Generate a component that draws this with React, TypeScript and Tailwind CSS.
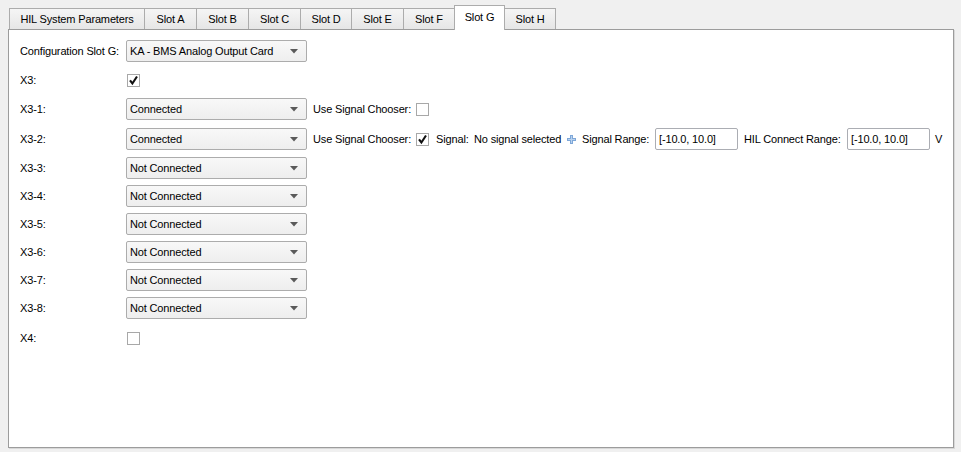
import React from "react";

const tabs = [
  { label: "HIL System Parameters", w: "w-[136px]" },
  { label: "Slot A", w: "w-[52px]" },
  { label: "Slot B", w: "w-[52px]" },
  { label: "Slot C", w: "w-[52px]" },
  { label: "Slot D", w: "w-[51px]" },
  { label: "Slot E", w: "w-[52px]" },
  { label: "Slot F", w: "w-[51px]" },
  { label: "Slot G", w: "w-[51px]" },
  { label: "Slot H", w: "w-[51px]" },
];

function Combo({ value }: { value: string }) {
  return (
    <div className="flex h-[22px] w-[181px] shrink-0 items-center justify-between rounded-[2px] border border-[#acacac] bg-linear-to-b from-[#f8f8f8] to-[#eeeeee] pl-[3px] pr-[8px]">
      <span>{value}</span>
      <svg width="8" height="5" viewBox="0 0 8 5">
        <path d="M0 0h8L4 4.5z" fill="#5a5a5a" />
      </svg>
    </div>
  );
}

function Check({ checked }: { checked?: boolean }) {
  return (
    <div className="flex h-[13px] w-[13px] shrink-0 items-center justify-center border border-[#a8a8a8] bg-white">
      {checked && (
        <svg width="11" height="11" viewBox="0 0 11 11">
          <path d="M2 5.3l2.4 3.2L9 1.5" fill="none" stroke="#111" strokeWidth="2.1" />
        </svg>
      )}
    </div>
  );
}

function Edit({ value }: { value: string }) {
  return (
    <div className="flex h-[22px] w-[83px] shrink-0 items-center rounded-[2px] border border-[#abadb3] bg-white pl-[3px]">
      {value}
    </div>
  );
}

function Row({ label, mt, children }: { label: string; mt: string; children: React.ReactNode }) {
  return (
    <div className={`flex h-[22px] items-center ${mt}`}>
      <span className="w-[106px] shrink-0">{label}</span>
      {children}
    </div>
  );
}

export default function App() {
  const notConnected = ["X3-3:", "X3-4:", "X3-5:", "X3-6:", "X3-7:", "X3-8:"];
  return (
    <div className="h-[452px] w-[961px] overflow-hidden bg-[#f0f0f0] font-['Liberation_Sans',Arial,sans-serif] text-[11px] tracking-[-0.15px] text-black">
      {/* Tab bar */}
      <div className="flex h-[29px] items-end pl-[9px]">
        {tabs.map((t, i) =>
          t.label === "Slot G" ? (
            <div
              key={t.label}
              className={`relative z-10 -mb-px -ml-px flex h-[25px] ${t.w} items-center justify-center border-x border-t border-[#acacac] bg-white pb-[2px]`}
            >
              {t.label}
            </div>
          ) : (
            <div
              key={t.label}
              className={`flex h-[21px] ${t.w} items-center justify-center border-t border-r border-[#acacac] bg-linear-to-b from-[#f5f5f5] to-[#e6e6e6] ${
                i === 0 ? "border-l" : ""
              }`}
            >
              {t.label}
            </div>
          )
        )}
      </div>

      {/* Pane */}
      <div className="ml-[8px] h-[419px] w-[946px] border border-[#9c9c9c] bg-white pl-[11px] pt-[10px] shadow-[1px_1px_0_#d8d8d8]">
        <Row label="Configuration Slot G:" mt="mt-0">
          <Combo value="KA - BMS Analog Output Card" />
        </Row>

        <Row label="X3:" mt="mt-[7px]">
          <div className="ml-px">
            <Check checked />
          </div>
        </Row>

        <Row label="X3-1:" mt="mt-[7px]">
          <Combo value="Connected" />
          <span className="ml-[6px] w-[103px] shrink-0">Use Signal Chooser:</span>
          <Check />
        </Row>

        <Row label="X3-2:" mt="mt-[8px]">
          <Combo value="Connected" />
          <span className="ml-[6px] w-[103px] shrink-0">Use Signal Chooser:</span>
          <Check checked />
          <span className="ml-[7px] w-[38px] shrink-0">Signal:</span>
          <span className="w-[93px] shrink-0">No signal selected</span>
          <svg width="9" height="9" viewBox="0 0 9 9" className="shrink-0">
            <path d="M3 0h3v3h3v3H6v3H3V6H0V3h3z" fill="#7ea7d8" />
            <path d="M4 1h1v3h3v1H5v3H4V5H1V4h3z" fill="#b9d2ef" />
          </svg>
          <span className="ml-[6px] w-[73px] shrink-0">Signal Range:</span>
          <Edit value="[-10.0, 10.0]" />
          <span className="ml-[6px] w-[103px] shrink-0">HIL Connect Range:</span>
          <Edit value="[-10.0, 10.0]" />
          <span className="ml-[5px]">V</span>
        </Row>

        {notConnected.map((l, i) => (
          <Row key={l} label={l} mt={i === 0 ? "mt-[7px]" : "mt-[6px]"}>
            <Combo value="Not Connected" />
          </Row>
        ))}

        <Row label="X4:" mt="mt-[8px]">
          <div className="ml-px">
            <Check />
          </div>
        </Row>
      </div>
    </div>
  );
}
